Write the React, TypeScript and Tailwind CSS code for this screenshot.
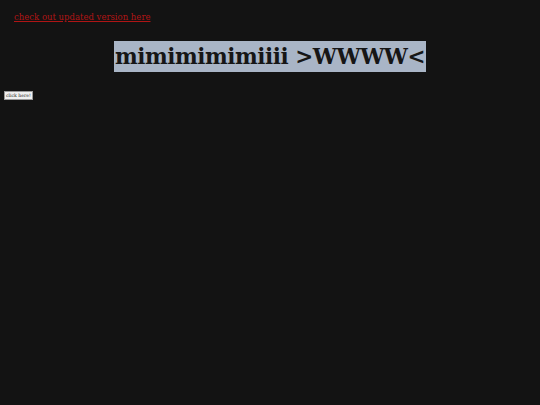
import React from 'react';

export default function App() {
  return (
    <div className="min-h-[405px] w-full bg-[#131313] font-['DejaVu_Serif',serif]">
      {/* link */}
      <div className="px-[14px] pt-[11px] text-[8.5px] leading-[12px]">
        <a href="#" className="text-[#b01515] underline">
          check out updated version here
        </a>
      </div>

      {/* heading */}
      <div className="mt-[18px] flex justify-center">
        <h1 className="bg-[#a9b5c6] px-[1px] text-[21.5px] leading-[31px] font-bold tracking-[-0.45px] text-[#161616]">
          mimimimimiiii &gt;WWWW&lt;
        </h1>
      </div>

      {/* button */}
      <div className="mt-[19px] px-[4px] text-[5px] leading-[9px]">
        <button className="border border-[#999] bg-[#f0f0f0] px-[1px] text-[4.6px] leading-[7px] text-[#222]">
          click here!
        </button>
      </div>
    </div>
  );
}
